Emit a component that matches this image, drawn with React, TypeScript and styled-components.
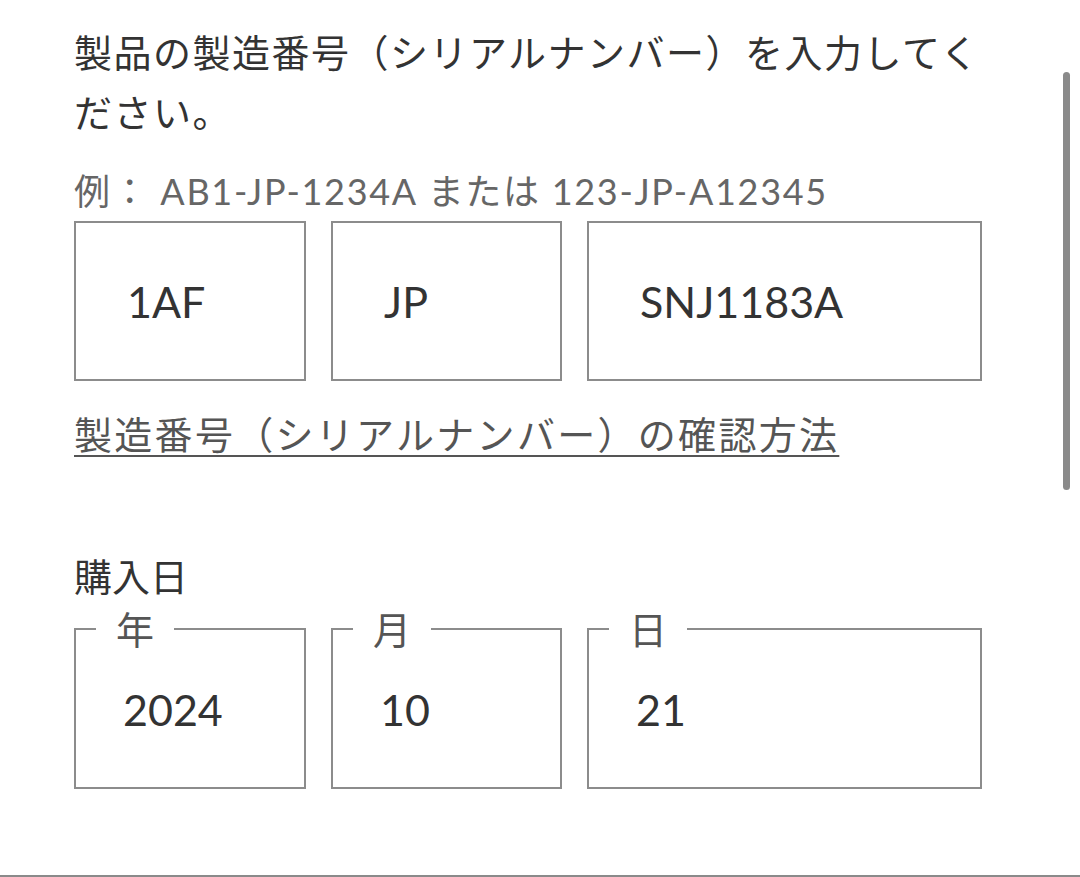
import React from 'react';
import styled, {createGlobalStyle} from 'styled-components';

const GlobalStyle = createGlobalStyle`
  html, body {
    margin: 0;
    padding: 0;
    background: #fff;
  }
  body {
    font-family: Lato, "Noto Sans CJK JP", sans-serif;
    color: #333;
    overflow: hidden;
  }
`;

const Page = styled.div`
  position: relative;
  box-sizing: border-box;
  height: 877px;
  padding: 22px 0 0 74px;
  border-bottom: 2px solid #8a8a8a;
`;

const Form = styled.div`
  width: 908px;
  display: flex;
  flex-direction: column;
`;

const Heading = styled.p`
  margin: 0;
  font-size: 38px;
  line-height: 60px;
  letter-spacing: 1.5px;
  color: #333;
`;

const Example = styled.p`
  margin: 25px 0 0;
  font-size: 36px;
  line-height: 48px;
  letter-spacing: 1.7px;
  color: #666;
  white-space: nowrap;
`;

const Row = styled.div<{$top: number}>`
  display: grid;
  grid-template-columns: 232px 231px 1fr;
  column-gap: 25px;
  margin-top: ${p => p.$top}px;
`;

const Field = styled.input`
  box-sizing: border-box;
  width: 100%;
  height: 160px;
  margin: 0;
  padding: 0 0 0 51px;
  border: 2px solid #8c8c8c;
  border-radius: 0;
  background: #fff;
  font-family: Lato, "Noto Sans CJK JP", sans-serif;
  font-size: 43px;
  color: #333;
  outline: none;
`;

const HelpLink = styled.a`
  align-self: flex-start;
  margin-top: 28px;
  font-size: 38px;
  line-height: 50px;
  color: #555;
  text-decoration: underline;
  text-decoration-thickness: 2px;
  text-underline-offset: 6px;
  letter-spacing: 2.3px;
`;

const Label = styled.p`
  margin: 92px 0 0;
  font-size: 38px;
  line-height: 50px;
  color: #333;
`;

const DateBox = styled.fieldset`
  box-sizing: border-box;
  min-width: 0;
  height: 180px;
  margin: 0;
  padding: 0 0 0 20px;
  border: 2px solid #8c8c8c;
`;

const Legend = styled.legend`
  padding: 0 20px;
  font-size: 38px;
  line-height: 40px;
  color: #555;
`;

const DateValue = styled.input`
  box-sizing: border-box;
  width: 100%;
  height: 120px;
  margin: 0;
  padding: 0 0 0 27px;
  border: none;
  background: transparent;
  font-family: Lato, "Noto Sans CJK JP", sans-serif;
  font-size: 43px;
  color: #333;
  outline: none;
`;

const ScrollThumb = styled.div`
  position: absolute;
  top: 72px;
  right: 10px;
  width: 7px;
  height: 418px;
  border-radius: 4px;
  background: #8a8a8a;
`;

const serial = ['1AF', 'JP', 'SNJ1183A'];
const purchaseDate = [
  {label: '年', value: '2024'},
  {label: '月', value: '10'},
  {label: '日', value: '21'},
];

export default function App() {
  return (
    <>
      <GlobalStyle />
      <Page>
        <Form>
          <Heading>製品の製造番号（シリアルナンバー）を入力してください。</Heading>
          <Example>例： AB1-JP-1234A または 123-JP-A12345</Example>
          <Row $top={6}>
            {serial.map(v => (
              <Field key={v} defaultValue={v} readOnly />
            ))}
          </Row>
          <HelpLink href="#">製造番号（シリアルナンバー）の確認方法</HelpLink>
          <Label>購入日</Label>
          <Row $top={8}>
            {purchaseDate.map(d => (
              <DateBox key={d.label}>
                <Legend>{d.label}</Legend>
                <DateValue defaultValue={d.value} readOnly />
              </DateBox>
            ))}
          </Row>
        </Form>
        <ScrollThumb />
      </Page>
    </>
  );
}
